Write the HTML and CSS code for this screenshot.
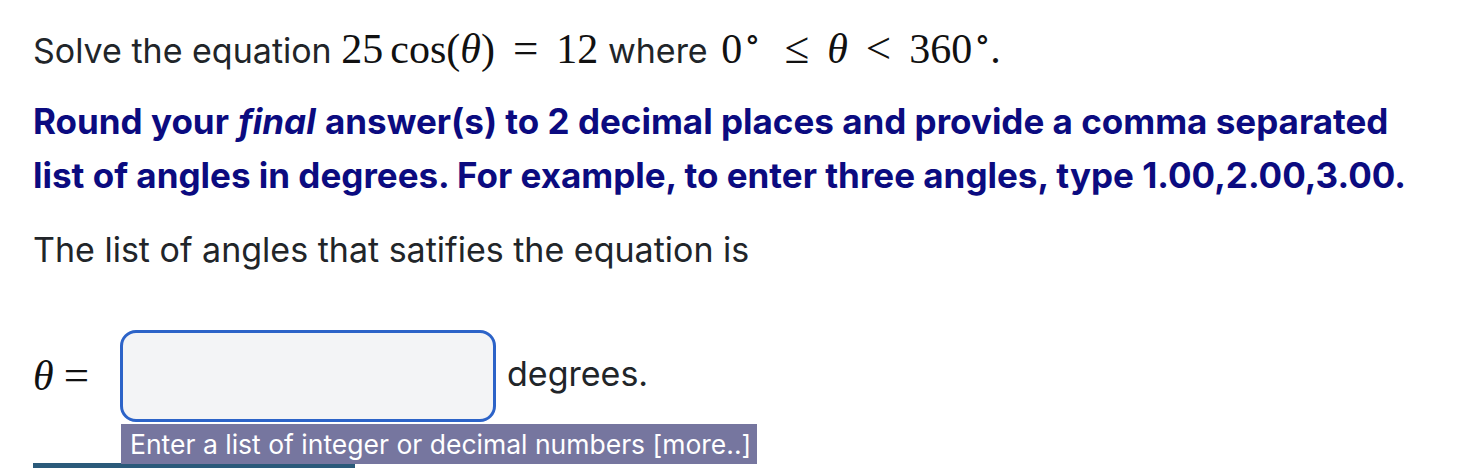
FILE: index.html
```html
<!DOCTYPE html>
<html>
<head>
<meta charset="utf-8">
<link rel="stylesheet" href="styles.css">
</head>
<body>
<div class="problem">
  <p class="line1">Solve the equation <span class="math"><span class="num">25</span><span class="op">cos</span>(<i>θ</i>)<span class="rel">=</span><span class="num">12</span></span> where <span class="math range"><span class="num">0</span><sup>∘</sup><span class="rel wide">≤</span><i>θ</i><span class="rel">&lt;</span><span class="num">360</span><sup>∘</sup>.</span></p>
  <p class="instr">Round your <em>final</em> answer(s) to 2 decimal places and provide a comma separated list of angles in degrees. For example, to enter three angles, type 1.00,2.00,3.00.</p>
  <p class="lead">The list of angles that satifies the equation is</p>
  <div class="answer-row">
    <span class="math lhs"><i>θ</i><span class="rel">=</span></span>
    <span class="field">
      <span class="input"></span>
      <span class="tip">Enter a list of integer or decimal numbers [more..]</span>
    </span>
    <span class="unit">degrees.</span>
  </div>
  <div class="btn-edge"></div>
</div>
</body>
</html>
```

FILE: styles.css
```css
html, body {
  margin: 0;
  padding: 0;
  background: #ffffff;
  overflow: hidden;
}
.problem {
  padding: 22px 0 0 33px;
  font-family: Inter, "Liberation Sans", sans-serif;
  font-size: 34px;
  line-height: 54px;
  color: #212529;
}
p {
  margin: 0;
}
.line1 {
  margin-bottom: 16px;
}
.instr {
  color: #0b0b80;
  font-weight: 700;
  font-size: 35px;
  width: 1395px;
}
.instr em {
  font-style: italic;
  display: inline-block;
  padding: 0 2px;
  margin: 0 -1px;
}
.lead {
  margin-top: 21px;
}
.math {
  font-family: "Liberation Serif", "DejaVu Serif", serif;
  font-size: 42px;
  line-height: 54px;
  color: #111;
}
.math.range {
  margin-left: 4px;
}
.math i {
  font-style: italic;
}
.math .op {
  margin-left: 7px;
}
.math .rel {
  font-size: 45px;
  line-height: 0;
  margin: 0 18px;
}
.math .rel.wide {
  margin-left: 24px;
}
.math sup {
  font-size: 33px;
  vertical-align: 13px;
  line-height: 0;
  margin-left: 2px;
}
.answer-row {
  display: flex;
  align-items: center;
  margin-top: 53px;
  height: 92px;
}
.lhs .rel {
  margin: 0 31px 0 10px;
}
.field {
  position: relative;
  display: block;
}
.input {
  display: block;
  box-sizing: border-box;
  width: 376px;
  height: 92px;
  border: 3px solid #2c63c8;
  border-radius: 16px;
  background: #f3f4f6;
}
.tip {
  position: absolute;
  left: 1px;
  top: 94px;
  width: 636px;
  height: 40px;
  box-sizing: border-box;
  padding-left: 9px;
  background: #76769f;
  color: #ffffff;
  font-size: 26.5px;
  line-height: 40px;
  white-space: nowrap;
}
.unit {
  margin-left: 11px;
  padding-bottom: 4px;
}
.btn-edge {
  margin-top: 41px;
  width: 322px;
  height: 10px;
  background: #2b5a7a;
}
```
